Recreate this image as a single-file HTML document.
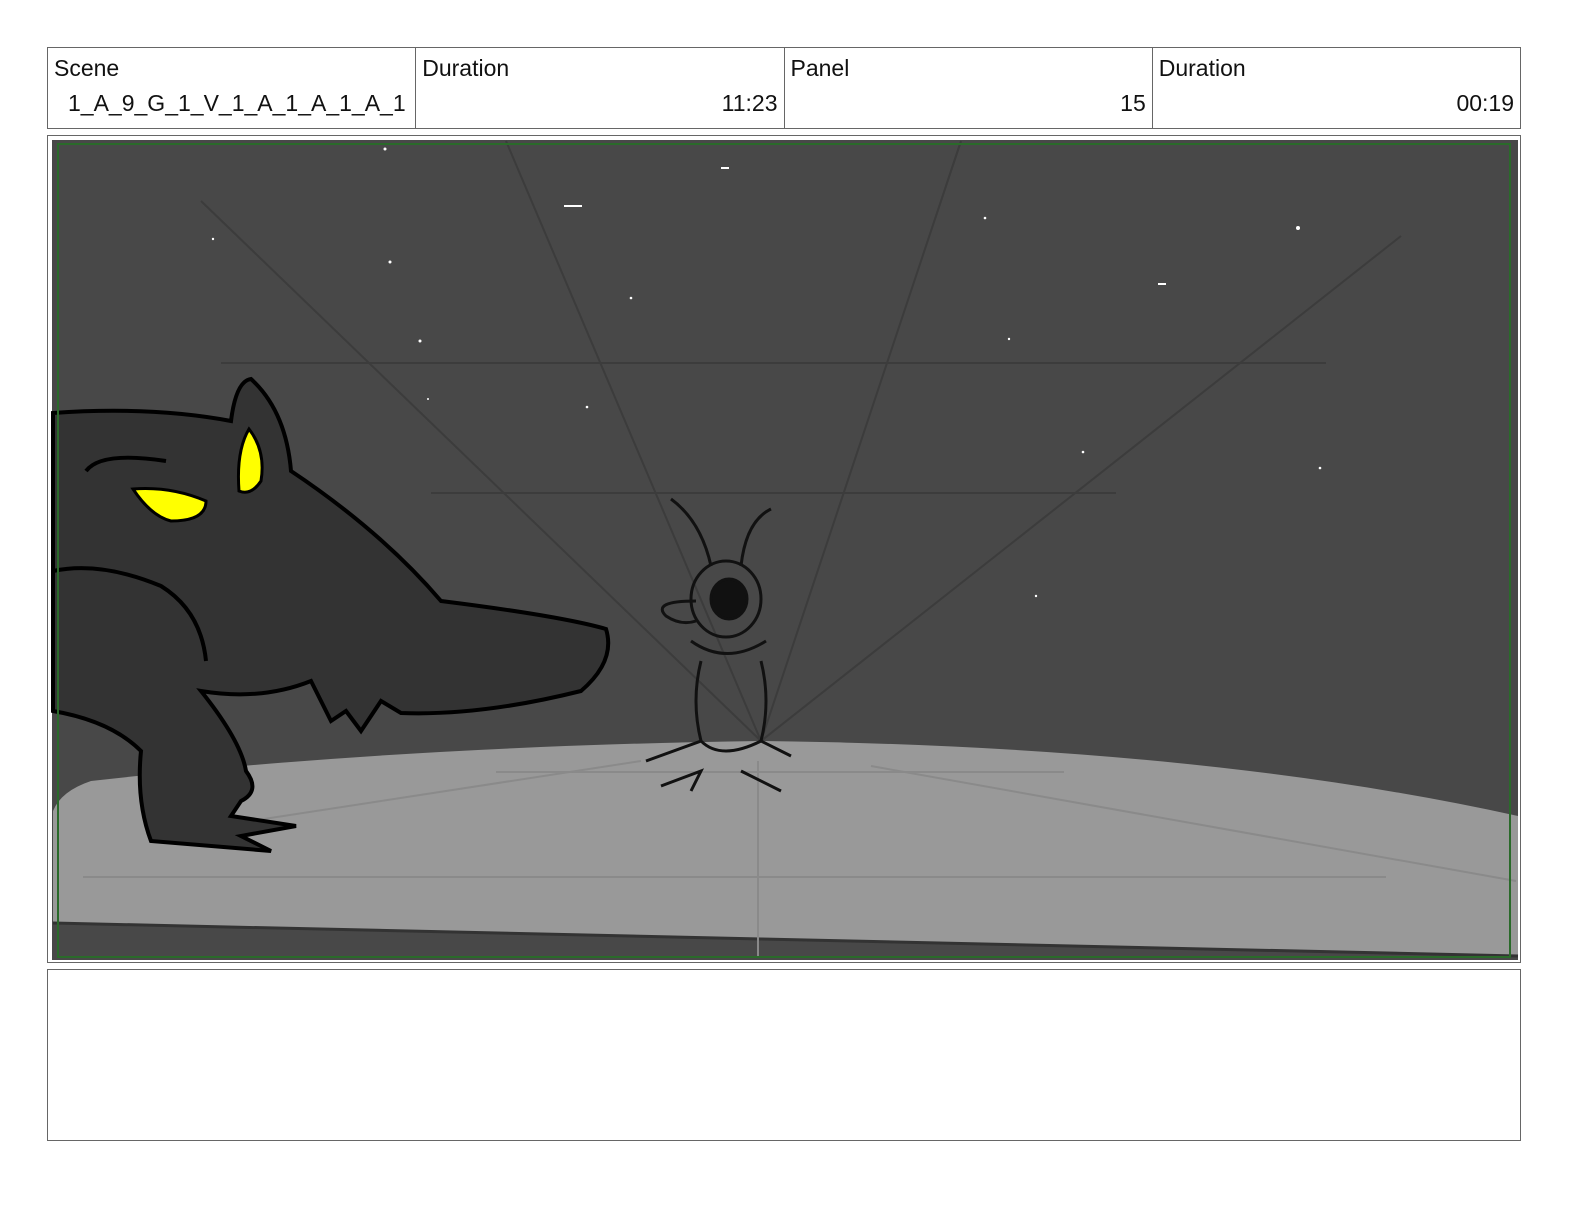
<!DOCTYPE html>
<html><head><style>
body{margin:0;width:1584px;height:1224px;background:#fff;position:relative;font-family:"Liberation Sans",sans-serif;overflow:hidden}
.hdr{position:absolute;left:47px;top:47px;width:1472px;height:80px;border:1px solid #666;display:flex}
.c{flex:1;border-right:1px solid #666;position:relative;font-size:23px;color:#111;letter-spacing:0}
.c:last-child{border-right:none}
.l{position:absolute;left:6px;top:7px}
.v{position:absolute;right:6px;top:42px}
.panel{position:absolute;left:47px;top:135px;width:1472px;height:826px;border:1px solid #666}
.notes{position:absolute;left:47px;top:969px;width:1472px;height:170px;border:1px solid #666}
</style></head><body>
<div class="hdr">
<div class="c"><span class="l">Scene</span><span class="v" style="left:20px;right:auto;white-space:nowrap">1_A_9_G_1_V_1_A_1_A_1_A_1</span></div>
<div class="c"><span class="l">Duration</span><span class="v">11:23</span></div>
<div class="c"><span class="l">Panel</span><span class="v">15</span></div>
<div class="c"><span class="l">Duration</span><span class="v">00:19</span></div>
</div>
<div class="panel">
<svg width="1472" height="826" viewBox="47 135 1472 826" style="display:block">
<rect x="51" y="139" width="1466" height="820" fill="#484848"/>
<g stroke="#3c3c3c" stroke-width="2" fill="none">
<line x1="200" y1="200" x2="760" y2="740"/><line x1="505" y1="140" x2="760" y2="740"/>
<line x1="960" y1="140" x2="760" y2="740"/><line x1="1400" y1="235" x2="760" y2="740"/>
<line x1="220" y1="362" x2="1325" y2="362"/><line x1="430" y1="492" x2="1115" y2="492"/>
</g>
<path d="M52 810 Q60 790 90 780 Q400 745 760 740 Q1200 745 1517 815 L1517 955 L760 938 L52 922 Z" fill="#999"/>
<path d="M52 922 L760 938 L1517 955" stroke="#333" stroke-width="3" fill="none"/>
<g stroke="#8a8a8a" stroke-width="2" fill="none">
<line x1="82" y1="876" x2="1385" y2="876"/><line x1="495" y1="771" x2="1063" y2="771"/>
<line x1="757" y1="760" x2="757" y2="955"/><line x1="870" y1="765" x2="1515" y2="880"/>
<line x1="250" y1="820" x2="640" y2="760"/>
</g>
<g fill="#fff"><circle cx="384" cy="148" r="1.5"/><rect x="720" y="166" width="8" height="2"/><rect x="563" y="204" width="18" height="2"/><circle cx="212" cy="238" r="1.2"/><circle cx="389" cy="261" r="1.5"/><circle cx="630" cy="297" r="1.3"/><circle cx="984" cy="217" r="1.3"/><circle cx="1297" cy="227" r="2"/><rect x="1157" y="282" width="8" height="2"/><circle cx="419" cy="340" r="1.5"/><circle cx="1008" cy="338" r="1.2"/><circle cx="586" cy="406" r="1.3"/><circle cx="427" cy="398" r="1"/><circle cx="1082" cy="451" r="1.3"/><circle cx="1319" cy="467" r="1.3"/><circle cx="1035" cy="595" r="1.2"/></g>
<path d="M52 412 Q150 405 230 420 Q235 380 250 378 Q285 410 290 470 Q380 530 440 600 Q560 615 605 628 Q615 660 580 690 Q480 715 400 712 L380 700 L360 730 L345 710 L330 720 L310 680 Q260 700 200 690 Q240 740 245 770 Q260 790 240 800 L230 815 L295 825 L240 835 L270 850 L150 840 Q135 800 140 750 Q110 720 52 710 Z" fill="#333" stroke="#000" stroke-width="4"/>
<path d="M52 570 Q100 560 160 585 Q200 610 205 660" fill="none" stroke="#000" stroke-width="4"/>
<path d="M85 470 Q100 450 165 460" fill="none" stroke="#000" stroke-width="4"/>
<path d="M132 488 Q170 485 205 500 Q205 520 170 520 Q150 515 132 488Z" fill="#ff0" stroke="#000" stroke-width="3"/>
<path d="M248 428 Q265 450 260 480 Q250 495 238 490 Q235 450 248 428Z" fill="#ff0" stroke="#000" stroke-width="3"/>
<g fill="none" stroke="#111" stroke-width="3">
<ellipse cx="725" cy="598" rx="35" ry="38"/><ellipse cx="728" cy="598" rx="18" ry="20" fill="#111"/>
<path d="M690 640 Q725 665 765 640 M700 660 Q690 700 700 740 L645 760 M760 660 Q770 700 760 740 L790 755 M700 740 Q720 760 760 740 M660 785 L700 770 L690 790 M780 790 L740 770 M710 565 Q700 520 670 498 M740 565 Q745 520 770 508 M695 600 Q650 600 665 615 Q680 625 695 620"/>
</g>
<rect x="57" y="143" width="1452" height="813" fill="none" stroke="#2a6a2a" stroke-width="2"/>
</svg>
</div>
<div class="notes"></div>
</body></html>
